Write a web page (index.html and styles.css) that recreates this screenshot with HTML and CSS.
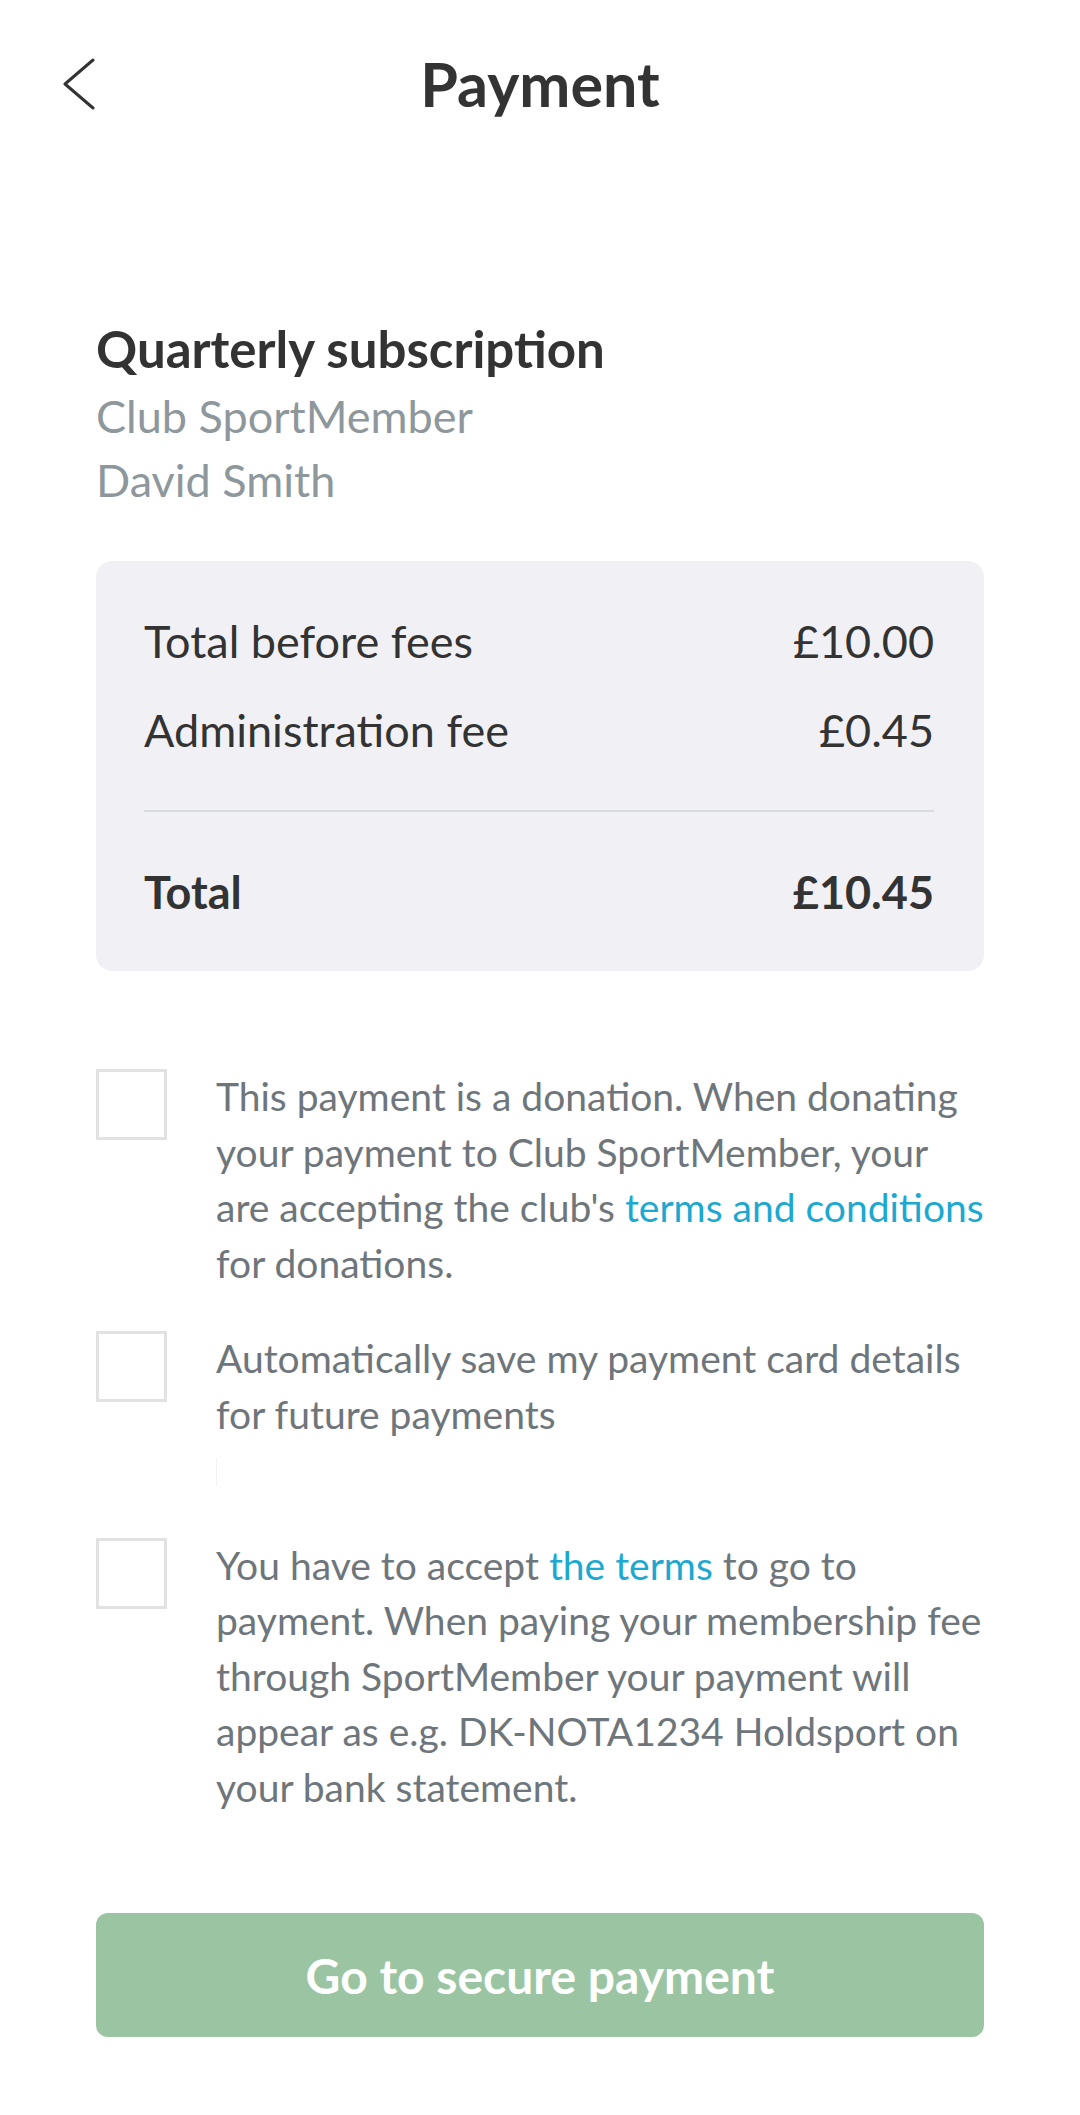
FILE: index.html
```html
<!DOCTYPE html>
<html lang="en">
<head>
<meta charset="utf-8">
<title>Payment</title>
<link rel="stylesheet" href="styles.css">
</head>
<body>
<div class="screen">
  <header class="topbar">
    <button class="back" aria-label="Back">
      <svg width="32" height="52" viewBox="0 0 32 52"><path d="M30 2 L2 26 L30 50"/></svg>
    </button>
    <h1 class="title">Payment</h1>
    <span class="spacer"></span>
  </header>

  <main class="content">
    <section class="summary">
      <h2 class="product">Quarterly subscription</h2>
      <p class="meta">Club SportMember</p>
      <p class="meta">David Smith</p>
    </section>

    <section class="card">
      <div class="row"><span>Total before fees</span><span>£10.00</span></div>
      <div class="row"><span>Administration fee</span><span>£0.45</span></div>
      <div class="divider"></div>
      <div class="row total"><span>Total</span><span>£10.45</span></div>
    </section>

    <section class="options">
      <label class="option">
        <span class="box"></span>
        <span class="text">This payment is a donation. When donating your payment to Club SportMember, your are&nbsp;accepting the club's <a class="link">terms and conditions</a> for donations.</span>
      </label>
      <label class="option">
        <span class="box"></span>
        <span class="text">Automatically save my payment card details for future payments<span class="hint"></span></span>
      </label>
      <label class="option">
        <span class="box"></span>
        <span class="text">You have to accept <a class="link">the terms</a> to go to payment. When paying your membership fee through SportMember your payment will appear as e.g. DK-NOTA1234 Holdsport on your bank statement.</span>
      </label>
    </section>

    <button class="pay">Go to secure payment</button>
  </main>
</div>
</body>
</html>
```

FILE: styles.css
```css
* { box-sizing: border-box; }

html, body {
  margin: 0;
  padding: 0;
  background: #ffffff;
}

body {
  font-family: Lato, "Liberation Sans", sans-serif;
  color: #333333;
}

.screen {
  width: 1080px;
  min-height: 2115px;
}

.topbar {
  display: grid;
  grid-template-columns: 1fr auto 1fr;
  align-items: center;
  padding-top: 48px;
}

.back {
  justify-self: start;
  margin: 0 0 0 63px;
  padding: 0;
  border: 0;
  background: none;
  display: flex;
}

.back svg path {
  fill: none;
  stroke: #333333;
  stroke-width: 3;
  stroke-linecap: round;
  stroke-linejoin: round;
}

.title {
  margin: 0;
  font-size: 61px;
  line-height: 72px;
  font-weight: 700;
  color: #333333;
}

.content {
  padding: 199px 96px 0 96px;
}

.product {
  margin: 0;
  font-size: 51px;
  line-height: 60px;
  font-weight: 700;
  color: #333333;
}

.meta {
  margin: 0;
  font-size: 45px;
  line-height: 64px;
  color: #8e979c;
}

.product + .meta {
  margin-top: 5px;
}

.card {
  margin-top: 49px;
  background: #f1f1f5;
  border-radius: 16px;
  padding: 36px 50px 34px 48px;
}

.row {
  display: flex;
  justify-content: space-between;
  font-size: 45px;
  line-height: 89px;
  color: #333333;
}

.row.total {
  font-weight: 700;
}

.divider {
  height: 2px;
  background: #d9dde1;
  margin: 35px 0 36px;
}

.options {
  margin-top: 98px;
  display: flex;
  flex-direction: column;
  gap: 40px;
}

.option {
  display: flex;
  align-items: flex-start;
  gap: 49px;
  margin-right: -16px;
}

.box {
  flex: none;
  width: 71px;
  height: 71px;
  border: 3px solid #e2e2e2;
  background: #ffffff;
}

.text {
  flex: 1;
  font-size: 39px;
  line-height: 55.5px;
  color: #6e767b;
}

.link {
  color: #1ba9d1;
  text-decoration: none;
}

.hint {
  display: block;
  height: 55.5px;
  padding-top: 16px;
}

.hint::before {
  content: "";
  display: block;
  width: 1px;
  height: 28px;
  background: #f2f2f2;
}

.pay {
  display: block;
  width: 100%;
  height: 124px;
  margin-top: 98px;
  border: 0;
  border-radius: 12px;
  background: #9bc5a2;
  color: #ffffff;
  font-family: Lato, "Liberation Sans", sans-serif;
  font-size: 48px;
  font-weight: 700;
}
```
